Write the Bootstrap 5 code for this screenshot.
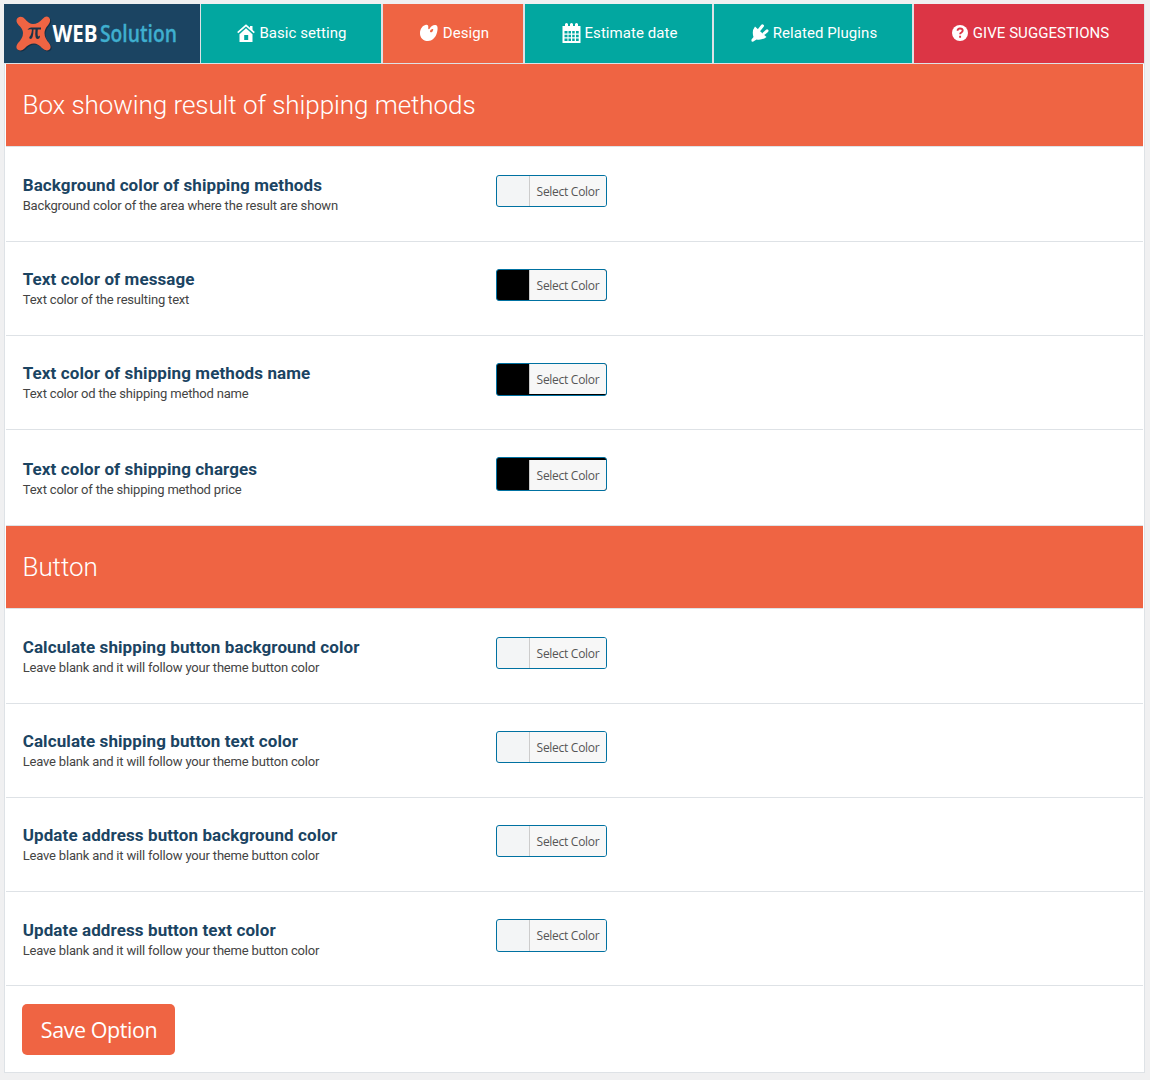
<!DOCTYPE html>
<html lang="en">
<head>
<meta charset="utf-8">
<meta name="viewport" content="width=device-width, initial-scale=1">
<title>Design settings</title>
<link href="https://cdn.jsdelivr.net/npm/bootstrap@5.3.0/dist/css/bootstrap.min.css" rel="stylesheet">
<style>
body{background:#f0f0f1;font-family:Roboto,"Liberation Sans",sans-serif;color:#444}
.panel{margin:4px 5px 0 4px;width:1141px;height:1069px;background:#fff;border:1px solid #dee2e6;border-top:0}
.tabs{height:60px;margin:0 0 0 -1px;background:#dee2e6;gap:2px;padding-bottom:1px}
.tabs .nav-link{padding:0 0 1px 2px;height:59px;color:#fff;font-size:15px;line-height:22px;border-radius:0;background:#02a7a0;gap:4px;letter-spacing:.06px}
.tabs .brand{width:196px;background:#1b4462;margin-right:-1px;padding:0}
.tabs .on{background:#ef6443;width:140px}
.tabs .hot{background:#dc3545;width:230px}
.t-basic{width:180px}.t-date{width:187px}.t-plug{width:198px}
.sect{height:82px;margin:0 1px;background:#ef6443;color:#fff;padding:0 17px 0 16.5px}
.sect h2{font-size:26px;font-weight:300;line-height:31px;margin:0;letter-spacing:-.07px}
.opt{height:94px;margin:0 1px;border-top:1px solid #dee2e6;padding:27px 17px 0}
.opt-a{height:95px;padding-top:28px}
.opt-b{height:97px;border-bottom:1px solid #dee2e6}
.opt-label{width:473px}
.opt-label h3{font-size:17px;font-weight:700;line-height:20px;color:#1b4462;margin:0 0 0 -.3px;letter-spacing:.1px}
.opt-label p{font-size:13px;line-height:20px;margin:1px 0 0 -.3px;color:#444;letter-spacing:-.18px}
.opt-b .opt-label{padding-top:2px}
.opt-end .opt-label{padding-top:1px}
.picker{width:111px;height:32px;padding:0;border:1px solid #0071a1;border-radius:3px;background:#f3f5f6;overflow:hidden}
.picker span{margin-left:auto;width:77px;background:#f7f7f7;border-left:1px solid #ccc;color:#555;font:12px/31px "Open Sans","Noto Sans",sans-serif;letter-spacing:-.28px;text-align:center}
.picker.dark{background:#000}
.tall{height:33px}
.low span{height:30px}
.tall.high{height:34px}
.high span{margin-top:2px}
.foot{margin:0 1px;border-top:1px solid #dee2e6;padding:18px 16px}
.save{width:153px;height:51px;background:#ef6443;color:#fff;border:0;border-radius:5px;padding:0 0 0 1px;font:21.5px/52px "Open Sans","Noto Sans",sans-serif;letter-spacing:-.45px}
svg text{font-family:"Open Sans",sans-serif;letter-spacing:0}
</style>
<script src="https://cdn.jsdelivr.net/npm/bootstrap@5.3.0/dist/js/bootstrap.bundle.min.js"></script>
</head>
<body>
<main class="panel">
<nav class="nav tabs d-flex flex-nowrap">
<a class="nav-link brand" href="#"><svg width="196" height="59" viewBox="4 4 196 59"><defs><path id="x-mark" d="M17.500 18Q21.500 15 25 19Q29 24 33 24Q38 24 43 18.500Q46 15 49 17.500Q51.500 20 48.500 24.500Q44.500 29 44.500 33Q44.500 38 49 43Q52 47 49.500 49.500Q46 52 42 48Q38 43.500 34 43.500Q29 43.500 24.500 48.500Q21 52 17.500 49.500Q15 47 18 43Q23 38 23 33Q23 29 18.500 25Q15 21 17.500 18Z"/></defs><use href="#x-mark" fill="#142f45" transform="translate(1 1)"/><use href="#x-mark" fill="#ef6443"/><path d="M27.500 30Q28.500 27.500 31 27.500H41V29.500H37.800Q37.200 36.500 38.500 36.500L40 35.500Q40 39 37.500 39Q34.500 39 35.500 29.500H33.500Q33.300 39 30.500 39Q28 38 30.500 35.500Q31.500 34 32 29.500Q29.500 29 27.500 30Z" fill="#1b3348"/><text x="52.500" y="42" font-size="23" font-weight="700" fill="#fff" textLength="45" lengthAdjust="spacingAndGlyphs">WEB</text><text x="100" y="42" font-size="23" font-weight="600" fill="#3fafcf" stroke="#3fafcf" stroke-width=".3" textLength="77" lengthAdjust="spacingAndGlyphs">Solution</text></svg></a>
<a class="nav-link t-basic d-flex align-items-center justify-content-center" href="#"><svg width="18" height="18" viewBox="0 0 18 18"><path d="M.7 8.700 9 1.300l8.300 7.400" stroke="#fff" stroke-width="1.700" fill="none"/><path d="M13 2h2.500v5L13 4.800z" fill="#fff"/><path d="M2.500 10.200 9 4.200l6.500 6V18h-13z" fill="#fff"/><path d="M7.200 11h4v5h-4z" fill="#02a7a0"/></svg>Basic setting</a>
<a class="nav-link on d-flex align-items-center justify-content-center" href="#"><svg width="20" height="18" viewBox="0 0 20 18"><path d="M7 .8C9 .5 9.500 2 9.300 3.500s.2 2.500 1.500 1C12 2 14 .8 16.500 1c2.500.3 2.500 4 1.500 7.500C16.500 14 13 17 9 17c-5 0-8-3.300-8-7.800C1 5 3.500 1.500 7 .8zM11 7.200c0 1.700 1.800 1.200 2.500.2.800-1 1-2 .4-2.300-1-.4-2.900.9-2.900 2.100z" fill="#fff" fill-rule="evenodd"/></svg>Design</a>
<a class="nav-link t-date d-flex align-items-center justify-content-center" href="#"><svg width="19" height="20" viewBox="0 0 19 20"><path d="M.5 3H3V1q1.500-2 3 0v2h2V1q1.500-2 3 0v2h2V1q1.500-2 3 0v2h2.500v17H.5z" fill="#fff"/><path d="M2.500 8h3v2.500h-3zm4 0h2.500v2.500H6.500zm3.700 0h2.500v2.500h-2.500zm3.800 0h2.700v2.500H14zM2.500 11.700h3v2.500h-3zm4 0h2.500v2.500H6.500zm3.700 0h2.500v2.500h-2.500zm3.800 0h2.700v2.500H14zM2.500 15.500h3V18h-3zm4 0h2.500V18H6.500zm3.700 0h2.500V18h-2.500zm3.800 0h2.700V18H14z" fill="#02a7a0"/></svg>Estimate date</a>
<a class="nav-link t-plug d-flex align-items-center justify-content-center" href="#"><svg width="18" height="18" viewBox="0 0 18 18"><path d="M4 2.500 15.500 13q-4.500 3.500-10 2.500l-3.100 2Q0 18.200.5 15.600L2.500 13Q.5 7 4 2.500z" fill="#fff"/><path d="m8.500 5.500 3-3.700M13 9.500l3-2.700" stroke="#fff" stroke-width="3" stroke-linecap="round"/></svg>Related Plugins</a>
<a class="nav-link hot d-flex align-items-center justify-content-center" href="#"><svg width="18" height="18" viewBox="0 0 18 18"><circle cx="9" cy="9" r="8" fill="#fff"/><path d="M6.600 6.800Q6.500 4.500 9 4.500q2.700 0 2.700 2.100 0 1.200-1.300 1.900-1.300.7-1.300 1.700M9.100 11.700v2" stroke="#dc3545" stroke-width="1.900" fill="none"/></svg>GIVE SUGGESTIONS</a>
</nav>
<header class="sect d-flex align-items-center"><h2>Box showing result of shipping methods</h2></header>
<div class="opt opt-a d-flex align-items-start"><div class="opt-label"><h3>Background color of shipping methods</h3><p>Background color of the area where the result are shown</p></div><button class="picker d-flex"><span>Select Color</span></button></div>
<div class="opt d-flex align-items-start"><div class="opt-label"><h3>Text color of message</h3><p>Text color of the resulting text</p></div><button class="picker dark d-flex"><span>Select Color</span></button></div>
<div class="opt d-flex align-items-start"><div class="opt-label"><h3>Text color of shipping methods name</h3><p>Text color od the shipping method name</p></div><button class="picker dark tall low d-flex"><span>Select Color</span></button></div>
<div class="opt opt-b d-flex align-items-start"><div class="opt-label"><h3>Text color of shipping charges</h3><p>Text color of the shipping method price</p></div><button class="picker dark tall high d-flex"><span>Select Color</span></button></div>
<header class="sect d-flex align-items-center"><h2>Button</h2></header>
<div class="opt opt-a d-flex align-items-start"><div class="opt-label"><h3>Calculate shipping button background color</h3><p>Leave blank and it will follow your theme button color</p></div><button class="picker d-flex"><span>Select Color</span></button></div>
<div class="opt d-flex align-items-start"><div class="opt-label"><h3>Calculate shipping button text color</h3><p>Leave blank and it will follow your theme button color</p></div><button class="picker d-flex"><span>Select Color</span></button></div>
<div class="opt d-flex align-items-start"><div class="opt-label"><h3>Update address button background color</h3><p>Leave blank and it will follow your theme button color</p></div><button class="picker d-flex"><span>Select Color</span></button></div>
<div class="opt opt-end d-flex align-items-start"><div class="opt-label"><h3>Update address button text color</h3><p>Leave blank and it will follow your theme button color</p></div><button class="picker tall d-flex"><span>Select Color</span></button></div>
<div class="foot"><button class="save">Save Option</button></div>
</main>
</body>
</html>
